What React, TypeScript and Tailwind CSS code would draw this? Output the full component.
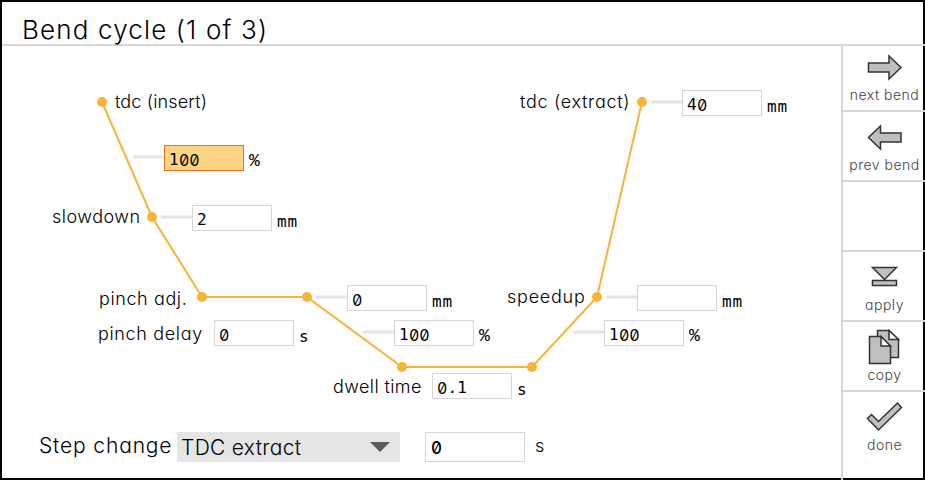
import React from "react";

const geo = "font-['Inter','Lato',sans-serif] [font-feature-settings:'cv11','ss03'] font-light whitespace-nowrap text-black";
const mono = "font-['DejaVu_Sans_Mono','Liberation_Mono',monospace] whitespace-nowrap text-black";

function Label({ className, children }: { className: string; children: React.ReactNode }) {
  return <span className={`absolute text-[18px] leading-6 ${geo} ${className}`}>{children}</span>;
}

// Fixed-pitch digits; zeros use the slashed form.
function Digits({ value }: { value: string }) {
  return (
    <>
      {value.split("").map((c, i) =>
        c === "0" ? (
          <span key={i} className="inline-block font-['Inter',sans-serif] tracking-normal [font-feature-settings:'zero','tnum']">
            0
          </span>
        ) : (
          <span key={i}>{c}</span>
        ),
      )}
    </>
  );
}

function Field({ className, value, unit, active }: { className: string; value: string; unit: string; active?: boolean }) {
  return (
    <div className={`absolute flex ${className}`}>
      <div
        className={`flex h-[26px] w-20 items-center border pl-1 pt-[3px] text-base tracking-[0.3px] ${mono} ${
          active ? "border-[#ee6f1d] bg-[#ffd484]" : "border-[#d6d6d6] bg-white"
        }`}
      >
        <Digits value={value} />
      </div>
      {unit === "%" ? (
        <span className="pl-[5px] pt-1 font-['Liberation_Mono',monospace] text-[18px] leading-6 text-black">%</span>
      ) : (
        <span className={`pl-[5px] pt-[5px] text-base leading-6 tracking-[0.8px] ${mono}`}>{unit}</span>
      )}
    </div>
  );
}

const points = [
  [102, 102],
  [152, 217],
  [202, 297],
  [307, 297],
  [402, 367],
  [532, 367],
  [597, 297],
  [642, 102],
];

const connectors = [
  [134, 164, 157],
  [162, 192, 217],
  [317, 347, 297],
  [364, 394, 332],
  [607, 637, 297],
  [574, 604, 332],
  [652, 682, 102],
];

function Action({ label, children }: { label?: string; children?: React.ReactNode }) {
  return (
    <div className="flex h-[70px] flex-col border-b-2 border-[#d6d6d6] last:border-b-0">
      <svg viewBox="0 0 82 48" className="h-12 w-[82px] shrink-0 fill-[#bfbfbf] stroke-[#333] stroke-[1.5]">
        {children}
      </svg>
      <span className="-mt-[5px] pl-px text-center font-['Inter','Lato',sans-serif] text-[14px] leading-5 font-light tracking-[0.5px] whitespace-nowrap text-[#444] [font-feature-settings:'cv11']">
        {label}
      </span>
    </div>
  );
}

export default function App() {
  return (
    <div className="h-[480px] w-[925px] overflow-hidden bg-black p-0.5">
      <div className="flex h-[476px] w-[921px] flex-col bg-white">
        <header className={`z-10 h-[42px] shrink-0 pl-5 pt-3 text-[26px] leading-8 tracking-[1.15px] ${geo}`}>Bend cycle (1 of 3)</header>
        <div className="flex w-[923px] flex-1 border-t-2 border-[#d6d6d6]">
          <main className="flex w-[839px] shrink-0 flex-col">
            <div className="relative h-[386px] w-full">
              <svg viewBox="2 46 839 386" className="h-[386px] w-[839px]">
                {connectors.map(([a, b, y]) => (
                  <path key={`${a}-${y}`} d={`M${a} ${y}H${b}`} stroke="#e5e5e5" strokeWidth="3" strokeLinecap="round" />
                ))}
                <polyline points={points.map((p) => p.join(",")).join(" ")} fill="none" stroke="#f7b437" strokeWidth="2" />
                {points.map(([x, y]) => (
                  <circle key={`${x}-${y}`} cx={x} cy={y} r="5" fill="#f7b437" />
                ))}
              </svg>
              <Label className="left-[113px] top-[44px] tracking-[0.15px]">tdc (insert)</Label>
              <Label className="left-[50px] top-[159px] tracking-[0.5px]">slowdown</Label>
              <Label className="left-[97px] top-[241px] tracking-[0.6px]">pinch adj.</Label>
              <Label className="left-[96px] top-[276px] tracking-[0.65px]">pinch delay</Label>
              <Label className="left-[331px] top-[329px] tracking-[0.4px]">dwell time</Label>
              <Label className="left-[505px] top-[239px] tracking-[0.75px]">speedup</Label>
              <Label className="left-[518px] top-[44px] tracking-[0.7px]">tdc (extract)</Label>
              <Field className="left-[162px] top-[99px]" value="100" unit="%" active />
              <Field className="left-[190px] top-[159px]" value="2" unit="mm" />
              <Field className="left-[345px] top-[239px]" value="0" unit="mm" />
              <Field className="left-[212px] top-[274px]" value="0" unit="s" />
              <Field className="left-[392px] top-[274px]" value="100" unit="%" />
              <Field className="left-[430px] top-[327px]" value="0.1" unit="s" />
              <Field className="left-[635px] top-[239px]" value="" unit="mm" />
              <Field className="left-[602px] top-[274px]" value="100" unit="%" />
              <Field className="left-[680px] top-[44px]" value="40" unit="mm" />
            </div>
            <div className={`flex h-[30px] pl-[37px] text-[21px] leading-[28px] ${geo}`}>
              <span className="w-[138px] tracking-[0.85px]">Step change</span>
              <div className="flex w-[223px] items-center justify-between bg-[#e5e5e5] pl-1 pr-2.5">
                <span className="pt-0.5 tracking-[0.3px]">TDC extract</span>
                <svg viewBox="0 0 20 10" className="h-2.5 w-5 fill-[#5c5c5c]">
                  <path d="M0 0H20L10 10Z" />
                </svg>
              </div>
              <div className="ml-[25px] flex w-[100px] items-center border border-[#d6d6d6] pl-[5px] pt-0.5 text-[17px] font-medium">
                <Digits value="0" />
              </div>
              <span className="pl-[10px] text-[18px]">s</span>
            </div>
          </main>
          <aside className="z-10 h-[434px] w-[84px] shrink-0 border-l-2 border-[#d6d6d6]">
            <nav className="-mt-1 flex flex-col">
              <Action label="next bend">
                <path d="M25.5 21H46V14L58 25.5 46 37V30H25.5Z" />
              </Action>
              <Action label="prev bend">
                <path d="M58 21H37.5V14L25.5 25.5 37.5 37V30H58Z" />
              </Action>
              <Action />
              <Action label="apply">
                <path d="M29.5 15.5H53.5L41.5 27.5Z M29.5 28.5H53.5V33.5H29.5Z" />
              </Action>
              <Action label="copy">
                <path d="M34.5 8.5H46L55.5 17.5V35.5H34.5Z" />
                <path className="fill-white" d="M46 8.5V17.5H55.5Z" />
                <path d="M26.5 14.5H38L47.5 24V41.5H26.5Z" />
                <path className="fill-white" d="M38 14.5V24H47.5Z" />
              </Action>
              <Action label="done">
                <path d="M24.5 26.5L28.5 22.5 35.5 29.5 54.5 11 58.5 15.5 35.5 38Z" />
              </Action>
            </nav>
          </aside>
        </div>
      </div>
    </div>
  );
}
